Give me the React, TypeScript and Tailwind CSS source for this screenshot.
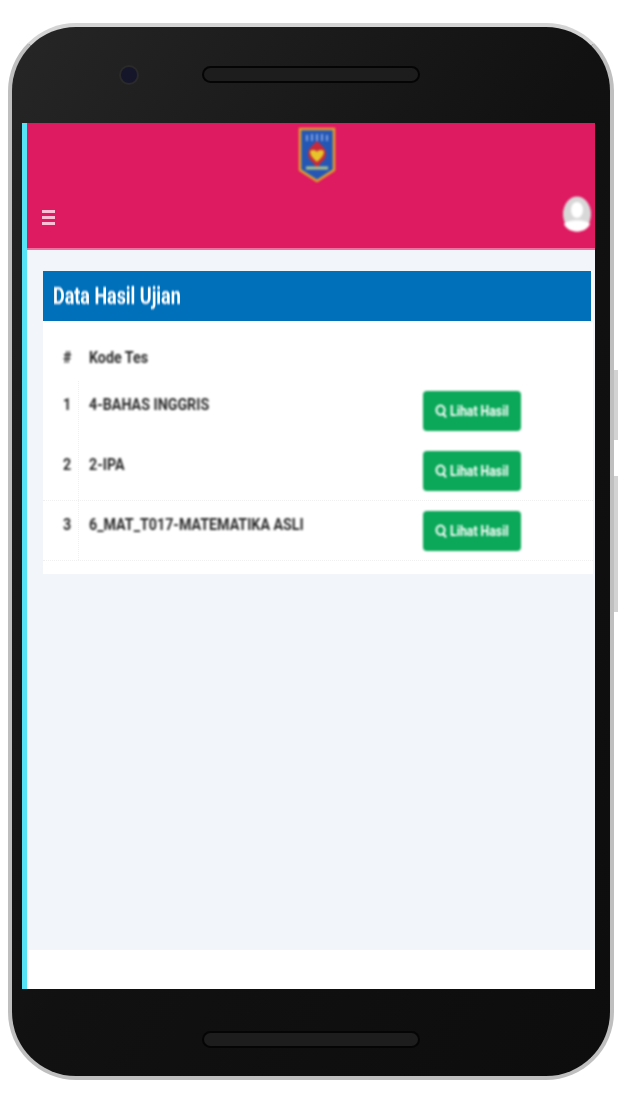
const rows = [
    { no: '1', code: '4-BAHAS INGGRIS', line: 'border-transparent' },
    { no: '2', code: '2-IPA', line: 'border-[#f0f0f0]' },
    { no: '3', code: '6_MAT_T017-MATEMATIKA ASLI', line: 'border-[#f0f0f0]' },
];

function Logo() {
    return (
        <svg width="38" height="56" viewBox="0 0 38 56" className="blur-[1px]">
            <path d="M2 2H36V43L19 54L2 43Z" fill="#2457b5" stroke="#e0a02c" strokeWidth="2.5" />
            <path d="M9 8V14M14 7V14M19 7V14M24 7V14M29 8V14" stroke="#7f9fe0" strokeWidth="2" />
            <path d="M19 14C12 20 7 25 12 33C15 36 17 36 19 44C21 36 23 36 26 33C31 25 26 20 19 14Z" fill="#c92a3a" />
            <path d="M12 24C15 22 18 23 19 25C20 23 23 22 26 24C26 29 22 32 19 35C16 32 12 29 12 24Z" fill="#e7c52a" />
            <path d="M8 41H30" stroke="#a9c48a" strokeWidth="3" />
        </svg>
    );
}

function Avatar() {
    return (
        <svg width="28" height="36" viewBox="0 0 28 36" className="blur-[1px]">
            <ellipse cx="14" cy="18" rx="14" ry="17.5" fill="#d8d8d8" />
            <ellipse cx="14" cy="14" rx="6" ry="8" fill="#fff" />
            <path d="M1 28C5 23 23 23 27 28C23 38 5 38 1 28Z" fill="#fff" />
        </svg>
    );
}

function SearchIcon() {
    return (
        <svg width="12" height="16" viewBox="0 0 13 16" fill="none" stroke="#fff" strokeWidth="2.2">
            <ellipse cx="6" cy="7" rx="4.4" ry="5" />
            <path d="M9 11L12 15" />
        </svg>
    );
}

function Speaker() {
    return <div className="w-[214px] h-[13px] rounded-full bg-[#1d1d1d] ring-2 ring-[#050505] blur-[0.7px]" />;
}

export default function App() {
    return (
        <div className="w-[634px] h-[1098px] bg-white overflow-hidden pl-[8px] pt-[23px] font-['Roboto',sans-serif]">
            <div className="relative w-[606px] h-[1057px]">
                {/* side keys */}
                <div className="absolute right-[-4px] top-[347px] w-[4px] h-[70px] bg-[#d2d2d2] blur-[0.5px]" />
                <div className="absolute right-[-4px] top-[453px] w-[4px] h-[136px] bg-[#d2d2d2] blur-[0.5px]" />

                <div className="flex flex-col h-full rounded-[68px] border-[4px] border-[#bfbfbf] border-t-[#d4d4d4] bg-gradient-to-br from-[#262626] via-[#111111] to-[#0d0d0d] blur-[0.5px] overflow-hidden">
                    <div className="h-[96px] flex items-start pt-[41px] pl-[109px] gap-[67px] shrink-0">
                        <div className="w-[16px] h-[16px] rounded-full bg-[#16162a] ring-2 ring-[#2a2a2a] mt-[-1px] blur-[0.7px]" />
                        <Speaker />
                    </div>

                    <div className="flex-1 flex pl-[10px] pr-[15px] min-h-0">
                        <div className="w-[5px] bg-[#56e3f5]" />
                        <div className="flex-1 flex flex-col bg-white">
                            <header className="h-[127px] bg-[#de1a60] border-b-[2px] border-[#f0709f] flex flex-col">
                                <div className="flex justify-center pt-[4px] pl-[12px]">
                                    <Logo />
                                </div>
                                <div className="flex justify-between items-center pl-[15px] pr-[4px] mt-[13px]">
                                    <div className="w-[13px] h-[15px] flex flex-col justify-between mt-[6px] blur-[0.7px]">
                                        <div className="h-[3px] bg-[#fbc0d5]" />
                                        <div className="h-[3px] bg-[#fbc0d5]" />
                                        <div className="h-[3px] bg-[#fbc0d5]" />
                                    </div>
                                    <Avatar />
                                </div>
                            </header>

                            <main className="h-[700px] bg-[#f2f5fa] pt-[21px] pl-[16px] pr-[2px]">
                                <section className="bg-white h-[303px]">
                                    <h2 className="h-[50px] w-[548px] bg-[#0070bb] flex items-center pl-[10px] text-white">
                                        <span className="text-[23px] font-bold leading-none origin-left scale-x-[0.78] whitespace-nowrap blur-[0.9px]">
                                            Data Hasil Ujian
                                        </span>
                                    </h2>
                                    <div className="h-[60px] flex pl-[20px] pt-[29px] text-[#2a2a2a] text-[16px] font-bold leading-none">
                                        <span className="w-[26px] origin-left scale-x-[0.89] blur-[0.9px]">#</span>
                                        <span className="origin-left scale-x-[0.89] blur-[0.9px]">Kode Tes</span>
                                    </div>
                                    {rows.map((row) => (
                                        <div
                                            key={row.no}
                                            className={`h-[60px] flex pl-[20px] border-b border-dotted text-[#2a2a2a] text-[16px] font-bold leading-none ${row.line}`}
                                        >
                                            <div className="w-[16px] border-r border-dotted border-[#f0f0f0] pt-[16px]">
                                                <div className="origin-left scale-x-[0.89] blur-[0.9px]">{row.no}</div>
                                            </div>
                                            <div className="w-[344px] pl-[10px] pt-[16px]">
                                                <div className="origin-left scale-x-[0.89] whitespace-nowrap blur-[0.9px]">{row.code}</div>
                                            </div>
                                            <div className="w-[98px] h-[40px] mt-[10px] rounded-[4px] bg-[#0aa858] flex items-center justify-center gap-[3px] text-white text-[15px] font-bold blur-[0.8px]">
                                                <SearchIcon />
                                                <span className="w-[60px] origin-left scale-x-[0.82] whitespace-nowrap">Lihat Hasil</span>
                                            </div>
                                        </div>
                                    ))}
                                </section>
                            </main>

                            <div className="flex-1 bg-white" />
                        </div>
                    </div>

                    <div className="h-[87px] shrink-0 flex justify-center pt-[44px]">
                        <Speaker />
                    </div>
                </div>
            </div>
        </div>
    );
}
